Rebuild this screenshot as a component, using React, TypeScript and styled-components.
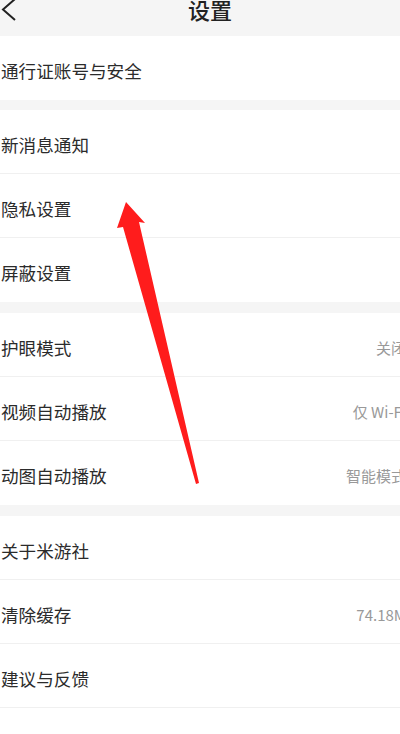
import React from 'react';
import styled, { createGlobalStyle } from 'styled-components';

const Global = createGlobalStyle`
    html, body {
        margin: 0;
        padding: 0;
        overflow: hidden;
        background: #fff;
    }
    body {
        font-family: "Noto Sans CJK SC", "Noto Sans", sans-serif;
    }
`

const Page = styled.div`
    position: relative;
    width: 406px;
    min-height: 734px;
    background: #fff;
`
const Header = styled.div`
    height: 36px;
    background: #f5f5f5;
    display: grid;
    grid-template-columns: 24px 1fr 10px;
    align-items: start;
`
const Back = styled.svg`
    display: block;
    width: 20px;
    height: 22px;
    margin-top: -1px;
`
const Title = styled.h1`
    margin: -2px 0 0;
    font-size: 22px;
    line-height: 22px;
    font-weight: 500;
    color: #222;
    text-align: center;
`
const Section = styled.div<{ $open?: boolean }>`
    background: #fff;
    & > div:last-child {
        border-bottom: ${p => (p.$open ? '1px solid #f0f0f0' : 'none')};
    }
`
const Gap = styled.div<{ $h: number }>`
    height: ${p => p.$h}px;
    background: #f5f5f5;
`
const Row = styled.div`
    height: 64px;
    box-sizing: border-box;
    padding: 5px 0 0 1px;
    display: flex;
    align-items: center;
    justify-content: space-between;
    border-bottom: 1px solid #f0f0f0;
`
const Label = styled.span`
    font-size: 17.6px;
    color: #2b2b2b;
`
const Value = styled.span`
    font-size: 15px;
    color: #999;
`
const Arrow = styled.svg`
    position: absolute;
    left: 0;
    top: 0;
    width: 400px;
    height: 734px;
    pointer-events: none;
`

type Item = { label: string; value?: string };

const sections: Item[][] = [
    [{ label: '通行证账号与安全' }],
    [{ label: '新消息通知' }, { label: '隐私设置' }, { label: '屏蔽设置' }],
    [
        { label: '护眼模式', value: '关闭' },
        { label: '视频自动播放', value: '仅 Wi-Fi' },
        { label: '动图自动播放', value: '智能模式' },
    ],
    [{ label: '关于米游社' }, { label: '清除缓存', value: '74.18M' }, { label: '建议与反馈' }],
];

export default function App() {
    return (
        <>
            <Global />
            <Page>
                <Header>
                    <Back viewBox="0 0 20 22">
                        <path d="M15 0 L3 10.5 L15 21" fill="none" stroke="#222" strokeWidth="2" />
                    </Back>
                    <Title>设置</Title>
                    <span />
                </Header>
                {sections.map((items, i) => (
                    <React.Fragment key={i}>
                        {i > 0 && <Gap $h={i === 1 ? 10 : 11} />}
                        <Section $open={i === sections.length - 1}>
                            {items.map(it => (
                                <Row key={it.label}>
                                    <Label>{it.label}</Label>
                                    {it.value && <Value>{it.value}</Value>}
                                </Row>
                            ))}
                        </Section>
                    </React.Fragment>
                ))}
                <Arrow viewBox="0 0 400 734">
                    <polygon
                        points="126,202 145,223 139,222 199,483 196,484 123,227 117,228"
                        fill="#ff1c1c"
                    />
                </Arrow>
            </Page>
        </>
    );
}
